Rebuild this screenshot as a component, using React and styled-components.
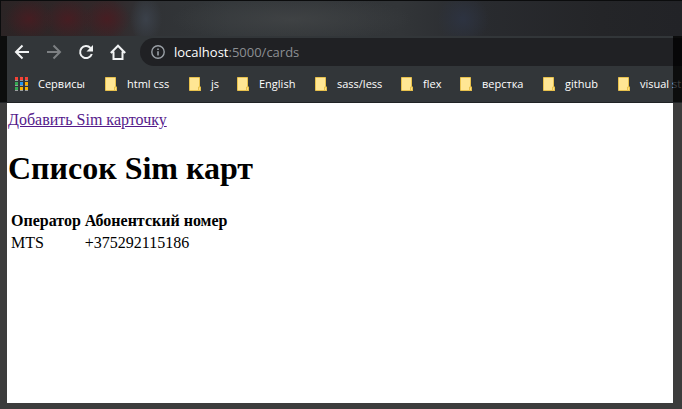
import React from "react";
import styled, { createGlobalStyle } from "styled-components";

const GlobalStyle = createGlobalStyle`
  * { box-sizing: border-box; }
  html, body, #root { height: 100%; margin: 0; }
  body { background: #3c3c3c; overflow: hidden; }
`;

const Desktop = styled.div`
  min-height: 100%;
  display: flex;
  flex-direction: column;
  background: #3c3c3c;
`;

const TabStrip = styled.div`
  height: 36px;
  flex: none;
  border-top: 1px solid #0b0c0d;
  border-left: 1px solid #0b0c0d;
  background:
    radial-gradient(ellipse 24px 20px at 28px 18px, rgba(78, 26, 32, 0.75) 0%, transparent 100%),
    radial-gradient(ellipse 24px 20px at 67px 18px, rgba(78, 26, 32, 0.75) 0%, transparent 100%),
    radial-gradient(ellipse 24px 20px at 106px 18px, rgba(78, 26, 32, 0.75) 0%, transparent 100%),
    radial-gradient(ellipse 16px 24px at 145px 18px, #3b414a 0%, transparent 100%),
    radial-gradient(ellipse 26px 26px at 462px 18px, #2d3341 0%, transparent 100%),
    radial-gradient(ellipse 120px 24px at 290px 18px, #3f4244 0%, transparent 100%),
    linear-gradient(90deg, #2b2425 0, #33282a 110px, #303235 140px, #33373a 230px, #323538 400px, #292b2f 480px, #242528 600px, #222327 100%);
`;

const Chrome = styled.div`
  position: relative;
  flex: none;
  padding: 0 0 0 7px;
  border-bottom: 1px solid #202326;
  background: #323639;
  overflow: hidden;
`;

const Shade = styled.div`
  position: absolute;
  top: 0;
  bottom: 0;
  left: ${(p) => (p.$side === "left" ? "0" : "auto")};
  right: ${(p) => (p.$side === "right" ? "0" : "auto")};
  width: ${(p) => (p.$side === "left" ? "7px" : "9px")};
  background: rgba(0, 0, 0, 0.76);
`;

const Toolbar = styled.div`
  display: flex;
  align-items: center;
  height: 32px;
  padding-left: 7px;
`;

const NavButton = styled.button`
  display: flex;
  flex: none;
  width: 16px;
  height: 16px;
  margin-right: 16px;
  padding: 0;
  border: 0;
  background: none;
  color: ${(p) => (p.disabled ? "#7d8083" : "#f1f3f4")};
`;

const AddressBar = styled.form`
  display: flex;
  align-items: center;
  flex: 1;
  gap: 9px;
  height: 28px;
  margin: 0 0 0 -2px;
  padding-left: 11px;
  border-radius: 14px 0 0 14px;
  background: #202124;
  color: #9aa0a6;
`;

const Address = styled.div`
  flex: 1;
  font: 13px/20px "Open Sans", "Noto Sans", sans-serif;
  color: #8c8f93;
  outline: none;
  white-space: nowrap;
`;

const Host = styled.span`
  color: #ffffff;
`;

const Bookmarks = styled.nav`
  display: flex;
  align-items: center;
  height: 34px;
  padding: 0 0 3px 8px;
`;

const Bookmark = styled.a`
  display: flex;
  align-items: center;
  flex: none;
  gap: 10px;
  width: ${(p) => p.$width}px;
  font: 11px/16px "Open Sans", "Noto Sans", sans-serif;
  color: #ffffff;
  text-decoration: none;
  white-space: nowrap;
`;

const Page = styled.main`
  flex: 1;
  margin: 0 9px 6px 7px;
  padding: 8px 1px;
  background: #ffffff;
  color: #000000;
  font: 16px/18px "Liberation Serif", "Times New Roman", serif;
`;

const AddLink = styled.a`
  color: #551a8b;
  text-decoration: underline;
`;

const Title = styled.h1`
  margin: 21px 0 22px;
  font-size: 32px;
  line-height: 37px;
  font-weight: bold;
`;

const CardTable = styled.table`
  border-spacing: 2px;

  th, td {
    padding: 1px;
    text-align: left;
  }
`;

const Icon = ({ children }) => (
  <svg width="16" height="16" viewBox="0 0 16 16" fill="none" stroke="currentColor" strokeWidth="2" aria-hidden="true">
    {children}
  </svg>
);

const BackIcon = () => (
  <Icon><path d="M15 8H2.5M8.500 1.500L2 8l6.500 6.500" /></Icon>
);

const ForwardIcon = () => (
  <Icon><path d="M1 8h12.500M7.500 1.500L14 8l-6.500 6.500" /></Icon>
);

const ReloadIcon = () => (
  <Icon>
    <path d="M13.800 10A6 6 0 1 1 12.500 4" />
    <path d="M15 1v6.500H8.500z" fill="currentColor" stroke="none" />
  </Icon>
);

const HomeIcon = () => (
  <Icon><path d="M0.800 9L8 1.700l7.200 7.300M3.500 7.500V15h9V7.500" /></Icon>
);

const InfoIcon = () => (
  <svg width="14" height="14" viewBox="0 0 14 14" fill="none" aria-hidden="true">
    <circle cx="7" cy="7" r="6.200" stroke="currentColor" strokeWidth="1.400" />
    <path d="M6.200 3.500h1.600v1.600H6.200zM6.200 6.200h1.600v4.300H6.200z" fill="currentColor" />
  </svg>
);

const appColors = [
  ["#f44336", "#f44336", "#f44336"],
  ["#34a853", "#2196f3", "#fbab00"],
  ["#34a853", "#fbb400", "#fbb400"],
];

const AppsIcon = () => (
  <svg width="13" height="14" viewBox="0 0 13 14" shapeRendering="crispEdges" aria-hidden="true">
    {appColors.map((row, y) =>
      row.map((color, x) => (
        <g key={`${x}-${y}`}>
          <rect x={x * 5} y={y * 5} width="3" height="3" fill={color} />
          <rect x={x * 5} y={y * 5 + 3} width="3" height="1" fill="#9a9d9f" />
        </g>
      ))
    )}
  </svg>
);

const FolderIcon = () => (
  <svg width="12" height="14" viewBox="0 0 12 14" aria-hidden="true">
    <path d="M0.500 0.500h10v9.500h1v3.500h-11z" fill="#ffe694" stroke="#e8c14c" />
    <path d="M9.500 13.500v-3.500h2v3.500z" fill="#ffe080" stroke="#e8c14c" />
  </svg>
);

const folders = [
  { name: "html css", width: 84 },
  { name: "js", width: 48 },
  { name: "English", width: 78 },
  { name: "sass/less", width: 86 },
  { name: "flex", width: 59 },
  { name: "верстка", width: 83 },
  { name: "github", width: 75 },
  { name: "visual st", width: 64 },
];

export default function App() {
  return (
    <Desktop>
      <GlobalStyle />
      <TabStrip />
      <Chrome>
        <Toolbar>
          <NavButton aria-label="Назад"><BackIcon /></NavButton>
          <NavButton aria-label="Вперёд" disabled><ForwardIcon /></NavButton>
          <NavButton aria-label="Обновить"><ReloadIcon /></NavButton>
          <NavButton aria-label="Главная"><HomeIcon /></NavButton>
          <AddressBar>
            <InfoIcon />
            <Address
              role="textbox"
              aria-label="Адрес"
              contentEditable
              suppressContentEditableWarning
              spellCheck={false}
            >
              <Host>localhost</Host>:5000/cards
            </Address>
          </AddressBar>
        </Toolbar>
        <Bookmarks>
          <Bookmark href="#apps" $width={90}><AppsIcon />Сервисы</Bookmark>
          {folders.map(({ name, width }) => (
            <Bookmark key={name} href="#folder" $width={width}>
              <FolderIcon />{name}
            </Bookmark>
          ))}
        </Bookmarks>
        <Shade $side="left" />
        <Shade $side="right" />
      </Chrome>
      <Page>
        <AddLink href="#add">Добавить Sim карточку</AddLink>
        <Title>Список Sim карт</Title>
        <CardTable>
          <thead>
            <tr><th>Оператор</th><th>Абонентский номер</th></tr>
          </thead>
          <tbody>
            <tr><td>MTS</td><td>+375292115186</td></tr>
          </tbody>
        </CardTable>
      </Page>
    </Desktop>
  );
}
